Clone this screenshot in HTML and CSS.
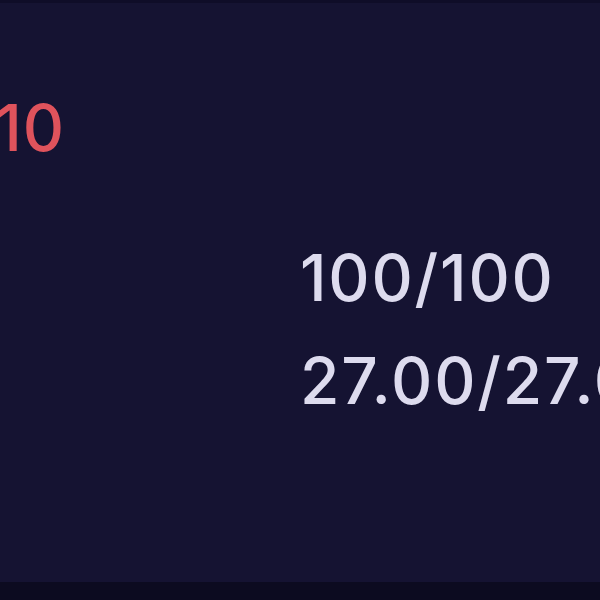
FILE: index.html
```html
<!DOCTYPE html>
<html>
<head>
<meta charset="utf-8">
<link rel="stylesheet" href="styles.css">
</head>
<body>
<div class="screen">
  <div class="topline"></div>
  <main class="panel">
    <div class="row-top">
      <div class="count"><span class="count-value">10</span></div>
    </div>
    <div class="stats">
      <div class="stat">100/100</div>
      <div class="stat">27.00/27.00</div>
    </div>
  </main>
  <div class="bottombar"></div>
</div>
</body>
</html>
```
FILE: styles.css
```css
html, body {
  margin: 0;
  padding: 0;
  background: #151332;
}
.screen {
  width: 600px;
  height: 600px;
  overflow: hidden;
  display: flex;
  flex-direction: column;
  font-family: Inter, "Noto Sans", sans-serif;
}
.topline {
  height: 3px;
  background: #0f0d28;
  flex: none;
}
.panel {
  flex: 1;
  display: flex;
  flex-direction: column;
  background: #151332;
}
.row-top {
  padding-top: 93px;
  display: flex;
}
.count {
  width: 65px;
  display: flex;
  justify-content: flex-end;
  overflow: hidden;
}
.count-value {
  flex: none;
  font-size: 64px;
  font-weight: 500;
  letter-spacing: 1px;
  line-height: 1;
  color: #df535c;
  white-space: nowrap;
}
.stats {
  margin-top: 86px;
  padding-left: 300px;
  display: flex;
  flex-direction: column;
  gap: 39px;
}
.stat {
  font-size: 64px;
  font-weight: 500;
  letter-spacing: 1.8px;
  line-height: 1;
  color: #dddbee;
  white-space: nowrap;
}
.bottombar {
  height: 18px;
  background: #0c0b20;
  flex: none;
}
```
